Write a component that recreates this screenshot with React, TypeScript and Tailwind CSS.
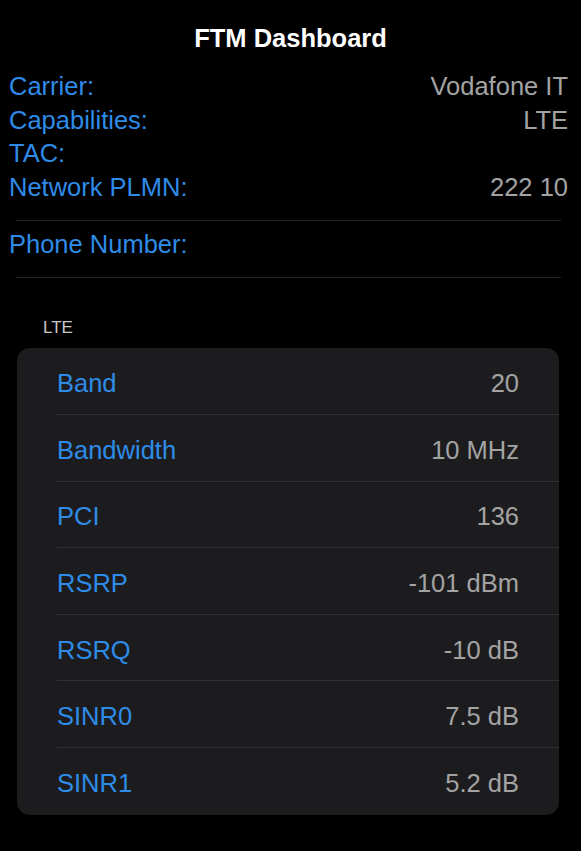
import React from "react";

const top = [
  { label: "Carrier:", value: "Vodafone IT" },
  { label: "Capabilities:", value: "LTE" },
  { label: "TAC:", value: "" },
  { label: "Network PLMN:", value: "222 10" },
];

const lte = [
  { label: "Band", value: "20" },
  { label: "Bandwidth", value: "10 MHz" },
  { label: "PCI", value: "136" },
  { label: "RSRP", value: "-101 dBm" },
  { label: "RSRQ", value: "-10 dB" },
  { label: "SINR0", value: "7.5 dB" },
  { label: "SINR1", value: "5.2 dB" },
];

export default function App() {
  return (
    <div
      className="min-h-[851px] w-[581px] bg-black text-[25.5px]"
      style={{ fontFamily: '"Liberation Sans", Arial, sans-serif' }}
    >
      <div className="pt-[22px] h-[32px] box-content text-center font-bold leading-[32px] text-white">
        FTM Dashboard
      </div>
      <div className="pt-[16.4px] pl-[9px] pr-[13px]">
        {top.map((r) => (
          <div key={r.label} className="flex justify-between leading-[33.5px]">
            <span className="text-[#2e8ce8]">{r.label}</span>
            <span className="text-[#a3a3a3]">{r.value}</span>
          </div>
        ))}
      </div>
      <div className="mt-[15.6px] ml-[16px] mr-[20px] h-px bg-[#262628]" />
      <div className="pt-[7.4px] pl-[9px] leading-[33.5px] text-[#2e8ce8]">Phone Number:</div>
      <div className="mt-[15px] ml-[16px] mr-[20px] h-px bg-[#262628]" />
      <div className="pt-[40px] pl-[43px] text-[17px] leading-[20px] text-[#c9c9c9]">LTE</div>
      <div className="mt-[10.6px] ml-[17px] mr-[22px] overflow-hidden rounded-[13px] bg-[#1c1c1e]">
        {lte.map((r, i) => (
          <div key={r.label} className="pl-[40px]">
            <div
              className={
                i < lte.length - 1
                  ? "flex h-[66.6px] items-center justify-between border-b border-[#323234] pr-[40px] pt-1"
                  : "flex h-[66.6px] items-center justify-between pr-[40px] pt-1"
              }
            >
              <span className="text-[#2e8ce8]">{r.label}</span>
              <span className="text-[#a3a3a3]">{r.value}</span>
            </div>
          </div>
        ))}
      </div>
    </div>
  );
}
